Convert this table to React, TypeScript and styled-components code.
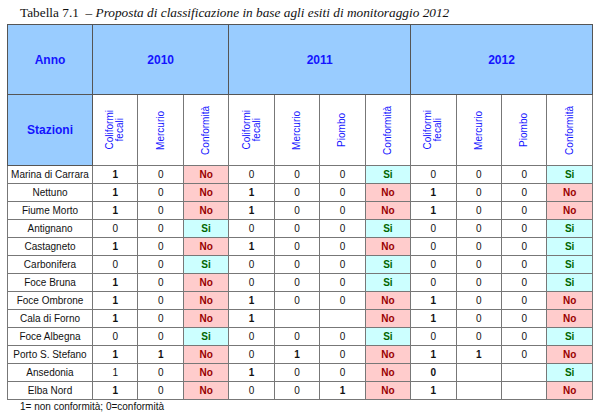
import React from "react";
import styled, { createGlobalStyle } from "styled-components";

const GlobalStyle = createGlobalStyle`
  html, body {
    margin: 0;
    padding: 0;
    background: #ffffff;
  }
`;

const Page = styled.div`
  width: 600px;
  height: 416px;
  padding: 5px 0 0 7px;
  box-sizing: border-box;
  overflow: hidden;
`;

const Caption = styled.div`
  font-family: "Liberation Serif", "Times New Roman", serif;
  font-size: 13.3px;
  color: #111;
  padding-left: 13px;
  height: 19px;
  line-height: 16px;
  white-space: nowrap;

  em {
    font-style: italic;
  }
`;

const Table = styled.table`
  border-collapse: collapse;
  table-layout: fixed;
  width: 585px;
  font-family: "Liberation Sans", Arial, sans-serif;
  border: 1px solid #555;
`;

const HeadCell = styled.th<{ $tall?: number }>`
  background: #99ccff;
  color: #1414ff;
  font-weight: bold;
  font-size: 12px;
  border: 1px solid #555;
  height: ${({ $tall }) => $tall ?? 69}px;
  padding: 0;
  text-align: center;
  vertical-align: middle;
`;

const ParamCell = styled.th`
  background: #ffffff;
  border: 1px solid #777;
  height: 70px;
  padding: 0;
  vertical-align: middle;
`;

const VerticalLabel = styled.div`
  writing-mode: vertical-rl;
  transform: rotate(180deg);
  margin: 0 auto;
  font-size: 10px;
  font-weight: normal;
  line-height: 10px;
  color: #1414ff;
  text-align: center;
`;

const Station = styled.td`
  border: 1px solid #777;
  height: 17px;
  padding: 0;
  font-size: 10px;
  color: #111;
  text-align: center;
  white-space: nowrap;
`;

const Value = styled.td<{ $bold?: boolean }>`
  border: 1px solid #777;
  height: 17px;
  padding: 0;
  font-size: 10px;
  color: #111;
  font-weight: ${({ $bold }) => ($bold ? "bold" : "normal")};
  text-align: center;
`;

const Verdict = styled.td<{ $ok: boolean }>`
  border: 1px solid #777;
  height: 17px;
  padding: 0;
  font-size: 10px;
  font-weight: bold;
  text-align: center;
  background: ${({ $ok }) => ($ok ? "#ccffff" : "#ffcccc")};
  color: ${({ $ok }) => ($ok ? "#006600" : "#990000")};
`;

const Note = styled.div`
  font-family: "Liberation Sans", Arial, sans-serif;
  font-size: 10px;
  color: #111;
  padding: 1px 0 0 13px;
`;

type Cell = string;
// "1b" = bold value, "" = empty, "Si"/"No" = verdict
const rows: [string, Cell[]][] = [
  ["Marina di Carrara", ["1b", "0", "No", "0", "0", "0", "Si", "0", "0", "0", "Si"]],
  ["Nettuno", ["1b", "0", "No", "1b", "0", "0", "No", "1b", "0", "0", "No"]],
  ["Fiume Morto", ["1b", "0", "No", "1b", "0", "0", "No", "1b", "0", "0", "No"]],
  ["Antignano", ["0", "0", "Si", "0", "0", "0", "Si", "0", "0", "0", "Si"]],
  ["Castagneto", ["1b", "0", "No", "1b", "0", "0", "No", "0", "0", "0", "Si"]],
  ["Carbonifera", ["0", "0", "Si", "0", "0", "0", "Si", "0", "0", "0", "Si"]],
  ["Foce Bruna", ["1b", "0", "No", "0", "0", "0", "Si", "0", "0", "0", "Si"]],
  ["Foce Ombrone", ["1b", "0", "No", "1b", "0", "0", "No", "1b", "0", "0", "No"]],
  ["Cala di Forno", ["1b", "0", "No", "1b", "", "", "No", "1b", "0", "0", "No"]],
  ["Foce Albegna", ["0", "0", "Si", "0", "0", "0", "Si", "0", "0", "0", "Si"]],
  ["Porto S. Stefano", ["1b", "1b", "No", "0", "1b", "0", "No", "1b", "1b", "0", "No"]],
  ["Ansedonia", ["1", "0", "No", "1b", "0", "0", "No", "0b", "", "", "Si"]],
  ["Elba Nord", ["1b", "0", "No", "0", "0", "1b", "No", "1b", "", "", "No"]],
];

const params2010 = [["Coliformi", "fecali"], ["Mercurio"], ["Conformità"]];
const paramsLater = [["Coliformi", "fecali"], ["Mercurio"], ["Piombo"], ["Conformità"]];

function renderCell(c: Cell, i: number) {
  if (c === "Si" || c === "No") {
    return (
      <Verdict key={i} $ok={c === "Si"}>
        {c}
      </Verdict>
    );
  }
  const bold = c.endsWith("b");
  return (
    <Value key={i} $bold={bold}>
      {bold ? c.slice(0, -1) : c}
    </Value>
  );
}

export default function App() {
  const params = [...params2010, ...paramsLater, ...paramsLater];
  return (
    <>
      <GlobalStyle />
      <Page>
        <Caption>
          Tabella 7.1&nbsp;&nbsp;<em>– Proposta di classificazione in base agli esiti di monitoraggio 2012</em>
        </Caption>
        <Table>
          <colgroup>
            <col style={{ width: 85 }} />
            {params.map((_, i) => (
              <col key={i} style={{ width: 45.45 }} />
            ))}
          </colgroup>
          <thead>
            <tr>
              <HeadCell>Anno</HeadCell>
              <HeadCell colSpan={3}>2010</HeadCell>
              <HeadCell colSpan={4}>2011</HeadCell>
              <HeadCell colSpan={4}>2012</HeadCell>
            </tr>
            <tr>
              <HeadCell $tall={70}>Stazioni</HeadCell>
              {params.map((p, i) => (
                <ParamCell key={i}>
                  <VerticalLabel>
                    {p.map((line, j) => (
                      <React.Fragment key={j}>
                        {j > 0 && <br />}
                        {line}
                      </React.Fragment>
                    ))}
                  </VerticalLabel>
                </ParamCell>
              ))}
            </tr>
          </thead>
          <tbody>
            {rows.map(([name, cells]) => (
              <tr key={name}>
                <Station>{name}</Station>
                {cells.map(renderCell)}
              </tr>
            ))}
          </tbody>
        </Table>
        <Note>1= non conformità; 0=conformità</Note>
      </Page>
    </>
  );
}
